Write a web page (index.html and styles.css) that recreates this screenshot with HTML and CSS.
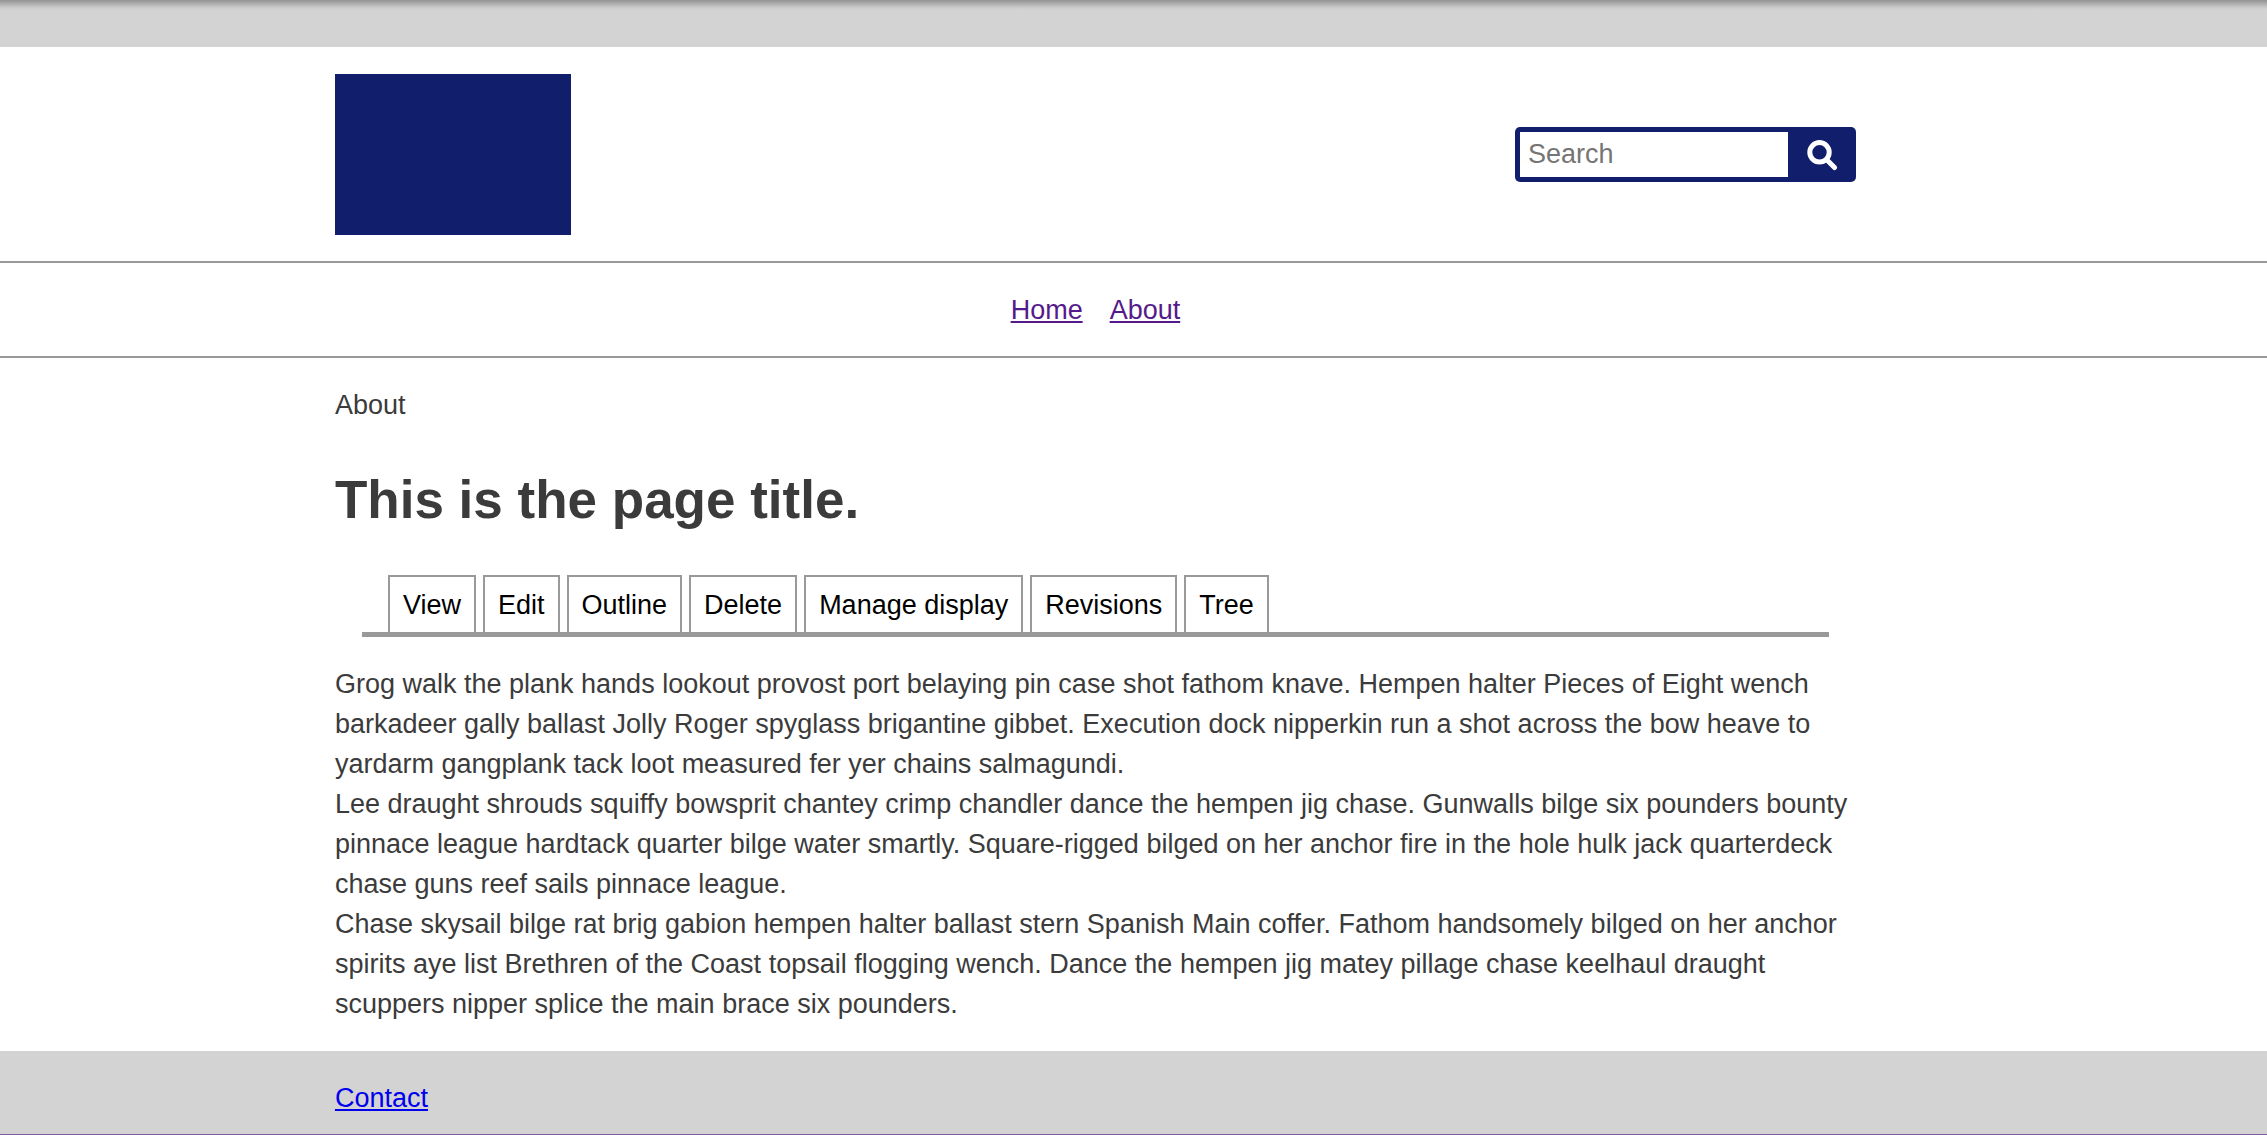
FILE: index.html
```html
<!DOCTYPE html>
<html lang="en">
<head>
<meta charset="utf-8">
<meta name="viewport" content="width=device-width, initial-scale=1">
<title>This is the page title.</title>
<link rel="stylesheet" href="styles.css">
</head>
<body>
<div class="topbar"></div>
<header class="band header">
  <div class="inner header-row">
    <a class="logo" href="#" aria-label="Home page"></a>
    <form class="search" role="search">
      <input class="search-input" type="search" placeholder="Search" aria-label="Search">
      <button class="search-button" type="submit" aria-label="Submit search">
        <svg class="search-icon" viewBox="0 0 32 32" aria-hidden="true">
          <circle cx="13.500" cy="13.300" r="9.700" fill="none" stroke="currentColor" stroke-width="5"/>
          <path d="M21.500 21.500 28.500 28.500" stroke="currentColor" stroke-width="5" stroke-linecap="round"/>
        </svg>
      </button>
    </form>
  </div>
</header>
<nav class="band main-nav" aria-label="Main">
  <ul class="inner nav-list">
    <li><a class="nav-link" href="#">Home</a></li>
    <li><a class="nav-link" href="#">About</a></li>
  </ul>
</nav>
<main class="band content">
  <div class="inner">
    <div class="breadcrumb">About</div>
    <h1 class="title">This is the page title.</h1>
    <ul class="tabs">
      <li><a class="tab" href="#">View</a></li>
      <li><a class="tab" href="#">Edit</a></li>
      <li><a class="tab" href="#">Outline</a></li>
      <li><a class="tab" href="#">Delete</a></li>
      <li><a class="tab" href="#">Manage display</a></li>
      <li><a class="tab" href="#">Revisions</a></li>
      <li><a class="tab" href="#">Tree</a></li>
    </ul>
    <p class="text">Grog walk the plank hands lookout provost port belaying pin case shot fathom knave. Hempen halter Pieces of Eight wench barkadeer gally ballast Jolly Roger spyglass brigantine gibbet. Execution dock nipperkin run a shot across the bow heave to yardarm gangplank tack loot measured fer yer chains salmagundi.</p>
    <p class="text">Lee draught shrouds squiffy bowsprit chantey crimp chandler dance the hempen jig chase. Gunwalls bilge six pounders bounty pinnace league hardtack quarter bilge water smartly. Square-rigged bilged on her anchor fire in the hole hulk jack quarterdeck chase guns reef sails pinnace league.</p>
    <p class="text">Chase skysail bilge rat brig gabion hempen halter ballast stern Spanish Main coffer. Fathom handsomely bilged on her anchor spirits aye list Brethren of the Coast topsail flogging wench. Dance the hempen jig matey pillage chase keelhaul draught scuppers nipper splice the main brace six pounders.</p>
  </div>
</main>
<footer class="band footer">
  <div class="inner"><a class="footer-link" href="#">Contact</a></div>
</footer>
</body>
</html>
```
FILE: styles.css
```css
* {
  box-sizing: border-box;
}

body {
  margin: 0;
  background: #fff;
  color: #3b3b3b;
  font: 27px/40px "Liberation Sans", Arial, sans-serif;
}

ul {
  margin: 0;
  padding: 0;
  list-style: none;
}

.topbar {
  height: 47px;
  background: linear-gradient(#929292, #b0b0b0 4px, #cecece 8px, #d3d3d3 11px);
}

/* The centre column caps its width; the outer gutters share the rest. */
.band {
  display: grid;
  grid-template-columns: 22fr minmax(0, 1521px) 27fr;
}

.inner {
  grid-column: 2;
}

.header {
  padding: 27px 0 26px;
}

.header-row {
  display: flex;
  align-items: center;
  justify-content: space-between;
}

.logo {
  width: 236px;
  height: 161px;
  background: #111e6c;
}

.search {
  display: flex;
  padding: 5px;
  border-radius: 5px;
  background: #111e6c;
}

.search-input {
  width: 268px;
  height: 45px;
  padding: 0 8px;
  border: 0;
  border-radius: 0;
  background: #fff;
  color: #3b3b3b;
  font: inherit;
  appearance: none;
}

.search-input::placeholder {
  color: #757575;
}

.search-button {
  display: flex;
  align-items: center;
  justify-content: center;
  width: 63px;
  padding: 0 0 0 5px;
  border: 0;
  background: none;
  color: #fff;
}

.search-icon {
  width: 32px;
  height: 32px;
}

.main-nav {
  padding: 27px 0 26px;
  border: solid #999;
  border-width: 2px 0;
}

.nav-list {
  display: flex;
  justify-content: center;
  gap: 27px;
}

.nav-link {
  color: #551a8b;
}

.content {
  padding: 27px 0;
}

.title {
  margin: 35px 0;
  font-size: 53px;
  line-height: 80px;
}

.tabs {
  display: flex;
  gap: 7px;
  margin: 0 27px 27px;
  padding: 0 26px;
  border-bottom: 5px solid #999;
}

.tab {
  display: block;
  padding: 8px 13px 7px;
  border: solid #999;
  border-width: 2px 2px 0;
  color: #000;
  text-decoration: none;
}

.text {
  margin: 0;
}

.footer {
  padding: 27px 0 16px;
  border-bottom: 1px solid #8059a8;
  background: #d3d3d3;
}

.footer-link {
  color: #00e;
}
```
